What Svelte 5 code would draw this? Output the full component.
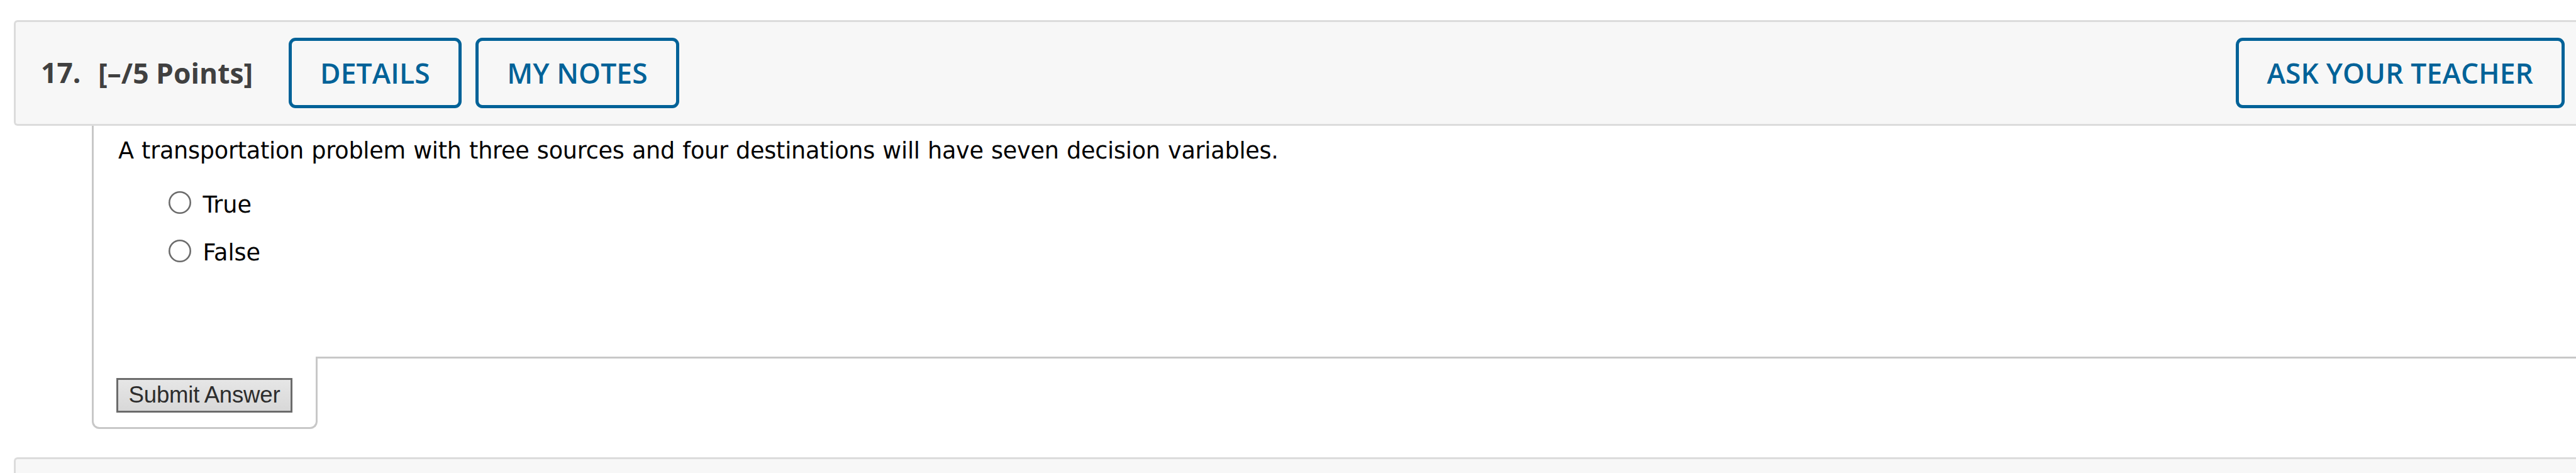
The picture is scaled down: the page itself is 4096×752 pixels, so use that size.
<script lang="ts">
  const choices = ['True', 'False'];

  let answer = $state('');
</script>

<main class="assignment">
  <header class="question-header">
    <h2 class="question-title">
      <span class="question-number">17.</span>
      <span>[–/5 Points]</span>
    </h2>
    <button type="button" class="action-btn">DETAILS</button>
    <button type="button" class="action-btn">MY NOTES</button>
    <button type="button" class="action-btn action-btn-teacher">ASK YOUR TEACHER</button>
  </header>

  <section class="question">
    <div class="question-body">
      <p class="prompt">
        A transportation problem with three sources and four destinations will have seven decision variables.
      </p>
      <div class="choices">
        {#each choices as choice}
          <label class="choice">
            <input type="radio" name="answer" value={choice} bind:group={answer} />
            <span>{choice}</span>
          </label>
        {/each}
      </div>
    </div>
    <div class="question-footer">
      <div class="submit-tab">
        <button type="button" class="submit-btn">Submit Answer</button>
      </div>
      <div class="footer-rule"></div>
    </div>
  </section>

  <div class="next-header"></div>
</main>

<style>
  :global(body) {
    background: #fff;
    overflow: hidden;
  }

  .assignment {
    box-sizing: border-box;
    display: flex;
    flex-direction: column;
    width: 4096px;
    height: 752px;
    padding: 32px 0 0 22px;
    overflow: hidden;
    background: #fff;
  }

  .question-header {
    box-sizing: border-box;
    display: flex;
    flex: none;
    align-items: center;
    height: 168px;
    padding: 0 18px 0 40px;
    border: 3px solid #dcdcdc;
    border-right: 0;
    border-radius: 6px 0 0 6px;
    background: #f7f7f7;
    font-family: 'Open Sans', sans-serif;
  }

  .question-title {
    display: flex;
    align-items: flex-start;
    gap: 27.5px;
    width: 394px;
    margin: 0;
    color: #404040;
    font-size: 44.4px;
    font-weight: 700;
    line-height: 60px;
    white-space: nowrap;
  }

  .question-number {
    line-height: 58px;
  }

  .action-btn {
    box-sizing: border-box;
    height: 112px;
    margin: 0 22.5px 0 0;
    padding: 0 45px;
    border: 5px solid #006298;
    border-radius: 11px;
    background: transparent;
    color: #006298;
    font-family: inherit;
    font-size: 44.4px;
    font-weight: 600;
    line-height: 60px;
    letter-spacing: 0.12px;
    white-space: nowrap;
  }

  .action-btn-teacher {
    margin: 0 0 0 auto;
  }

  .question {
    flex: none;
    margin-left: 124px;
  }

  .question-body {
    box-sizing: border-box;
    height: 367px;
    padding: 16px 0 0 39px;
    border-left: 3px solid #c8c8c8;
    color: #000;
    font-family: Verdana, 'DejaVu Sans', sans-serif;
    font-size: 36.6px;
  }

  .prompt {
    margin: 0;
    line-height: 48px;
    letter-spacing: -0.25px;
    word-spacing: 0.9px;
    white-space: nowrap;
  }

  .choices {
    display: flex;
    flex-direction: column;
    gap: 28.5px;
    margin: 37px 0 0 80px;
  }

  .choice {
    display: flex;
    align-items: center;
    gap: 18.5px;
    height: 48px;
    letter-spacing: -0.1px;
  }

  .choice input {
    box-sizing: border-box;
    width: 36px;
    height: 36px;
    margin: 0 0 6px;
    appearance: none;
    border-radius: 50%;
    background: #fff;
    box-shadow: inset 0 0 0 2.6px #6b6b6b;
  }

  .question-footer {
    display: flex;
    align-items: flex-start;
  }

  .submit-tab {
    box-sizing: border-box;
    width: 359px;
    height: 115px;
    padding: 34px 0 0 36px;
    border: 3px solid #c8c8c8;
    border-top: 0;
    border-radius: 0 0 12px 12px;
  }

  .submit-btn {
    display: block;
    box-sizing: border-box;
    width: 280px;
    height: 55px;
    padding: 0 0 2px;
    border: 3px solid #6b6b6b;
    border-radius: 0;
    background: linear-gradient(#e6e6e6, #d8d8d8);
    color: #2d2d2d;
    font-family: 'Liberation Sans', sans-serif;
    font-size: 36.6px;
    line-height: 47px;
    letter-spacing: -0.2px;
    word-spacing: -0.5px;
    white-space: nowrap;
  }

  .footer-rule {
    flex: 1;
    height: 3px;
    margin-left: -3px;
    background: #c8c8c8;
  }

  .next-header {
    box-sizing: border-box;
    flex: none;
    height: 168px;
    margin-top: 45px;
    border: 3px solid #dcdcdc;
    border-right: 0;
    border-radius: 6px 0 0 6px;
    background: #f7f7f7;
  }
</style>
